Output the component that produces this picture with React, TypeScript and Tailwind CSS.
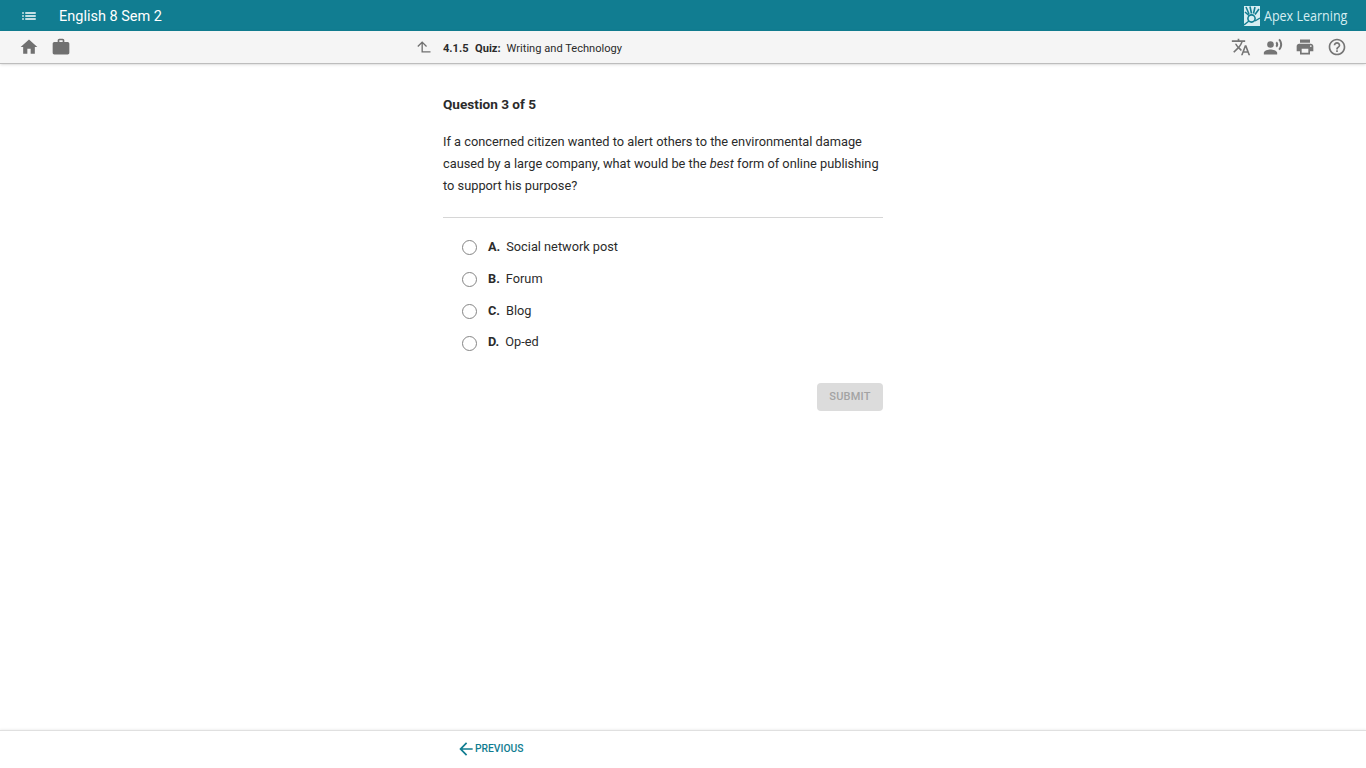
import React from 'react';

const Icon: React.FC<{ d: string; className?: string }> = ({ d, className }) => (
  <svg viewBox="0 0 24 24" fill="currentColor" className={className}>
    <path d={d} />
  </svg>
);

const icons = {
  list: 'M3 13h2v-2H3v2zm0 4h2v-2H3v2zm0-8h2V7H3v2zm4 4h14v-2H7v2zm0 4h14v-2H7v2zM7 7v2h14V7H7z',
  home: 'M10 20v-6h4v6h5v-8h3L12 3 2 12h3v8z',
  work: 'M20 6h-4V4c0-1.11-.89-2-2-2h-4c-1.11 0-2 .89-2 2v2H4c-1.11 0-1.99.89-1.99 2L2 19c0 1.11.89 2 2 2h16c1.11 0 2-.89 2-2V8c0-1.11-.89-2-2-2zm-6 0h-4V4h4v2z',
  translate:
    'M12.87 15.07l-2.54-2.51.03-.03c1.74-1.94 2.98-4.17 3.71-6.53H17V4h-7V2H8v2H1v1.99h11.17C11.5 7.92 10.44 9.75 9 11.35 8.07 10.32 7.3 9.19 6.69 8h-2c.73 1.63 1.73 3.17 2.98 4.56l-5.09 5.02L4 19l5-5 3.11 3.11.76-2.04zM18.5 10h-2L12 22h2l1.12-3h4.75L21 22h2l-4.5-12zm-2.62 7l1.62-4.33L19.12 17h-3.24z',
  voice:
    'M5 9a4 4 0 1 0 8 0a4 4 0 1 0-8 0zM9 15c-2.67 0-8 1.34-8 4v2h16v-2c0-2.66-5.33-4-8-4zm7.76-9.64l-1.68 1.69c.84 1.18.84 2.71 0 3.89l1.68 1.69c2.02-2.02 2.02-5.07 0-7.27zM20.07 2l-1.63 1.63c2.77 3.02 2.77 7.56 0 10.74L20.07 16c3.9-3.89 3.91-9.95 0-14z',
  print:
    'M19 8H5c-1.66 0-3 1.34-3 3v6h4v4h12v-4h4v-6c0-1.66-1.34-3-3-3zm-3 11H8v-5h8v5zm3-7c-.55 0-1-.45-1-1s.45-1 1-1 1 .45 1 1-.45 1-1 1zm-1-9H6v4h12V3z',
  help: 'M11 18h2v-2h-2v2zm1-16C6.48 2 2 6.48 2 12s4.48 10 10 10 10-4.48 10-10S17.52 2 12 2zm0 18c-4.41 0-8-3.59-8-8s3.59-8 8-8 8 3.59 8 8-3.59 8-8 8zm0-14c-2.21 0-4 1.79-4 4h2c0-1.1.9-2 2-2s2 .9 2 2c0 2-3 1.75-3 5h2c0-2.25 3-2.5 3-5 0-2.21-1.79-4-4-4z',
  back: 'M20 11H7.83l5.59-5.59L12 4l-8 8 8 8 1.41-1.41L7.83 13H20v-2z',
  up: 'M11 5 5.2 10.8l1.1 1.1L10.2 8v10.6H21V17H11.8V8l3.9 3.9 1.1-1.1z',
};

const choices = [
  { letter: 'A.', text: 'Social network post', shift: '' },
  { letter: 'B.', text: 'Forum', shift: '' },
  { letter: 'C.', text: 'Blog', shift: '' },
  { letter: 'D.', text: 'Op-ed', shift: '-translate-y-px' },
];

const ApexLogo = () => (
  <svg viewBox="0 0 16 20" className="w-4 h-5 shrink-0">
    <rect width="16" height="20" fill="#d6eef2" />
    <path d="M2 1l3 7M6 0.5l1.5 7M11 1L9.5 7.5M15 3l-4 5.5M1 6l4 3.5" stroke="#117d91" strokeWidth="1.6" fill="none" />
    <circle cx="7.5" cy="12.5" r="3.6" fill="none" stroke="#117d91" strokeWidth="1.6" />
    <path d="M0 19l5-4M16 12l-5 3" stroke="#117d91" strokeWidth="1.4" />
  </svg>
);

export default function App() {
  return (
    <div className="h-screen bg-white flex flex-col font-['Roboto',sans-serif] text-[#2b2b2b] overflow-hidden">
      {/* Top bar */}
      <header className="h-[31px] bg-[#117d91] flex items-center shrink-0 text-white">
        <div className="w-[59px] pl-5 shrink-0">
          <Icon d={icons.list} className="w-[18px] h-[18px]" />
        </div>
        <span className="text-[14.5px] pt-[2px]">English 8 Sem 2</span>
        <div className="ml-auto mr-[19px] flex items-center gap-1">
          <ApexLogo />
          <span className="font-['Open_Sans',sans-serif] text-[15px] scale-x-[0.835] origin-left w-[83px] whitespace-nowrap text-[#d6eef2]">
            Apex Learning
          </span>
        </div>
      </header>

      {/* Sub bar */}
      <div className="h-[33px] bg-[#f5f5f5] border-b border-[#bdbdbd] shadow-sm flex items-center shrink-0 text-[#707070]">
        <div className="flex items-center gap-3 pl-[19px] w-[413px] shrink-0">
          <Icon d={icons.home} className="w-5 h-5" />
          <Icon d={icons.work} className="w-5 h-5" />
        </div>
        <Icon d={icons.up} className="w-5 h-5 shrink-0" />
        <div className="ml-[10px] pt-1 text-[11.1px] text-[#2b2b2b] flex items-center">
          <span className="font-bold mr-[6.5px]">4.1.5</span>
          <span className="font-bold mr-[6px]">Quiz:</span>
          <span>Writing and Technology</span>
        </div>
        <div className="ml-auto mr-[19px] flex items-center gap-3 text-[#757575]">
          <Icon d={icons.translate} className="w-5 h-5" />
          <Icon d={icons.voice} className="w-5 h-5" />
          <Icon d={icons.print} className="w-5 h-5" />
          <Icon d={icons.help} className="w-5 h-5" />
        </div>
      </div>

      {/* Question */}
      <main className="flex-1 ml-[443px] w-[440px]">
        <h1 className="mt-[32px] text-[13.6px] leading-[16px] font-bold">Question 3 of 5</h1>
        <p className="mt-[19px] text-[12.8px] leading-[22px]">
          If a concerned citizen wanted to alert others to the environmental damage caused by a large company, what
          would be the <em>best</em> form of online publishing to support his purpose?
        </p>
        <hr className="mt-[20px] border-[#d6d6d6]" />
        <div className="mt-[13px] pl-[19px]">
          {choices.map((c) => (
            <label key={c.letter} className="flex items-center h-8">
              <span className="w-[13px] h-[13px] box-content rounded-full border border-[#858585] bg-white shrink-0" />
              <span className={`ml-[11px] text-[12.75px] flex ${c.shift}`}>
                <span className="font-bold mr-[6px]">{c.letter}</span>
                <span>{c.text}</span>
              </span>
            </label>
          ))}
        </div>
        <div className="mt-[24px] flex justify-end">
          <button className="w-[66px] h-[28px] rounded-sm bg-[#dcdcdc] text-[#a3a3a3] text-[11px] font-medium tracking-[0.2px]">
            SUBMIT
          </button>
        </div>
      </main>

      {/* Footer */}
      <footer className="h-[38px] border-t border-[#e0e0e0] shadow-[0_-1px_2px_rgba(0,0,0,0.06)] shrink-0 flex items-center pl-[456px] pb-[2px] text-[#117d91]">
        <Icon d={icons.back} className="w-5 h-5" />
        <span className="-ml-px text-[10.3px] font-medium">PREVIOUS</span>
      </footer>
    </div>
  );
}
